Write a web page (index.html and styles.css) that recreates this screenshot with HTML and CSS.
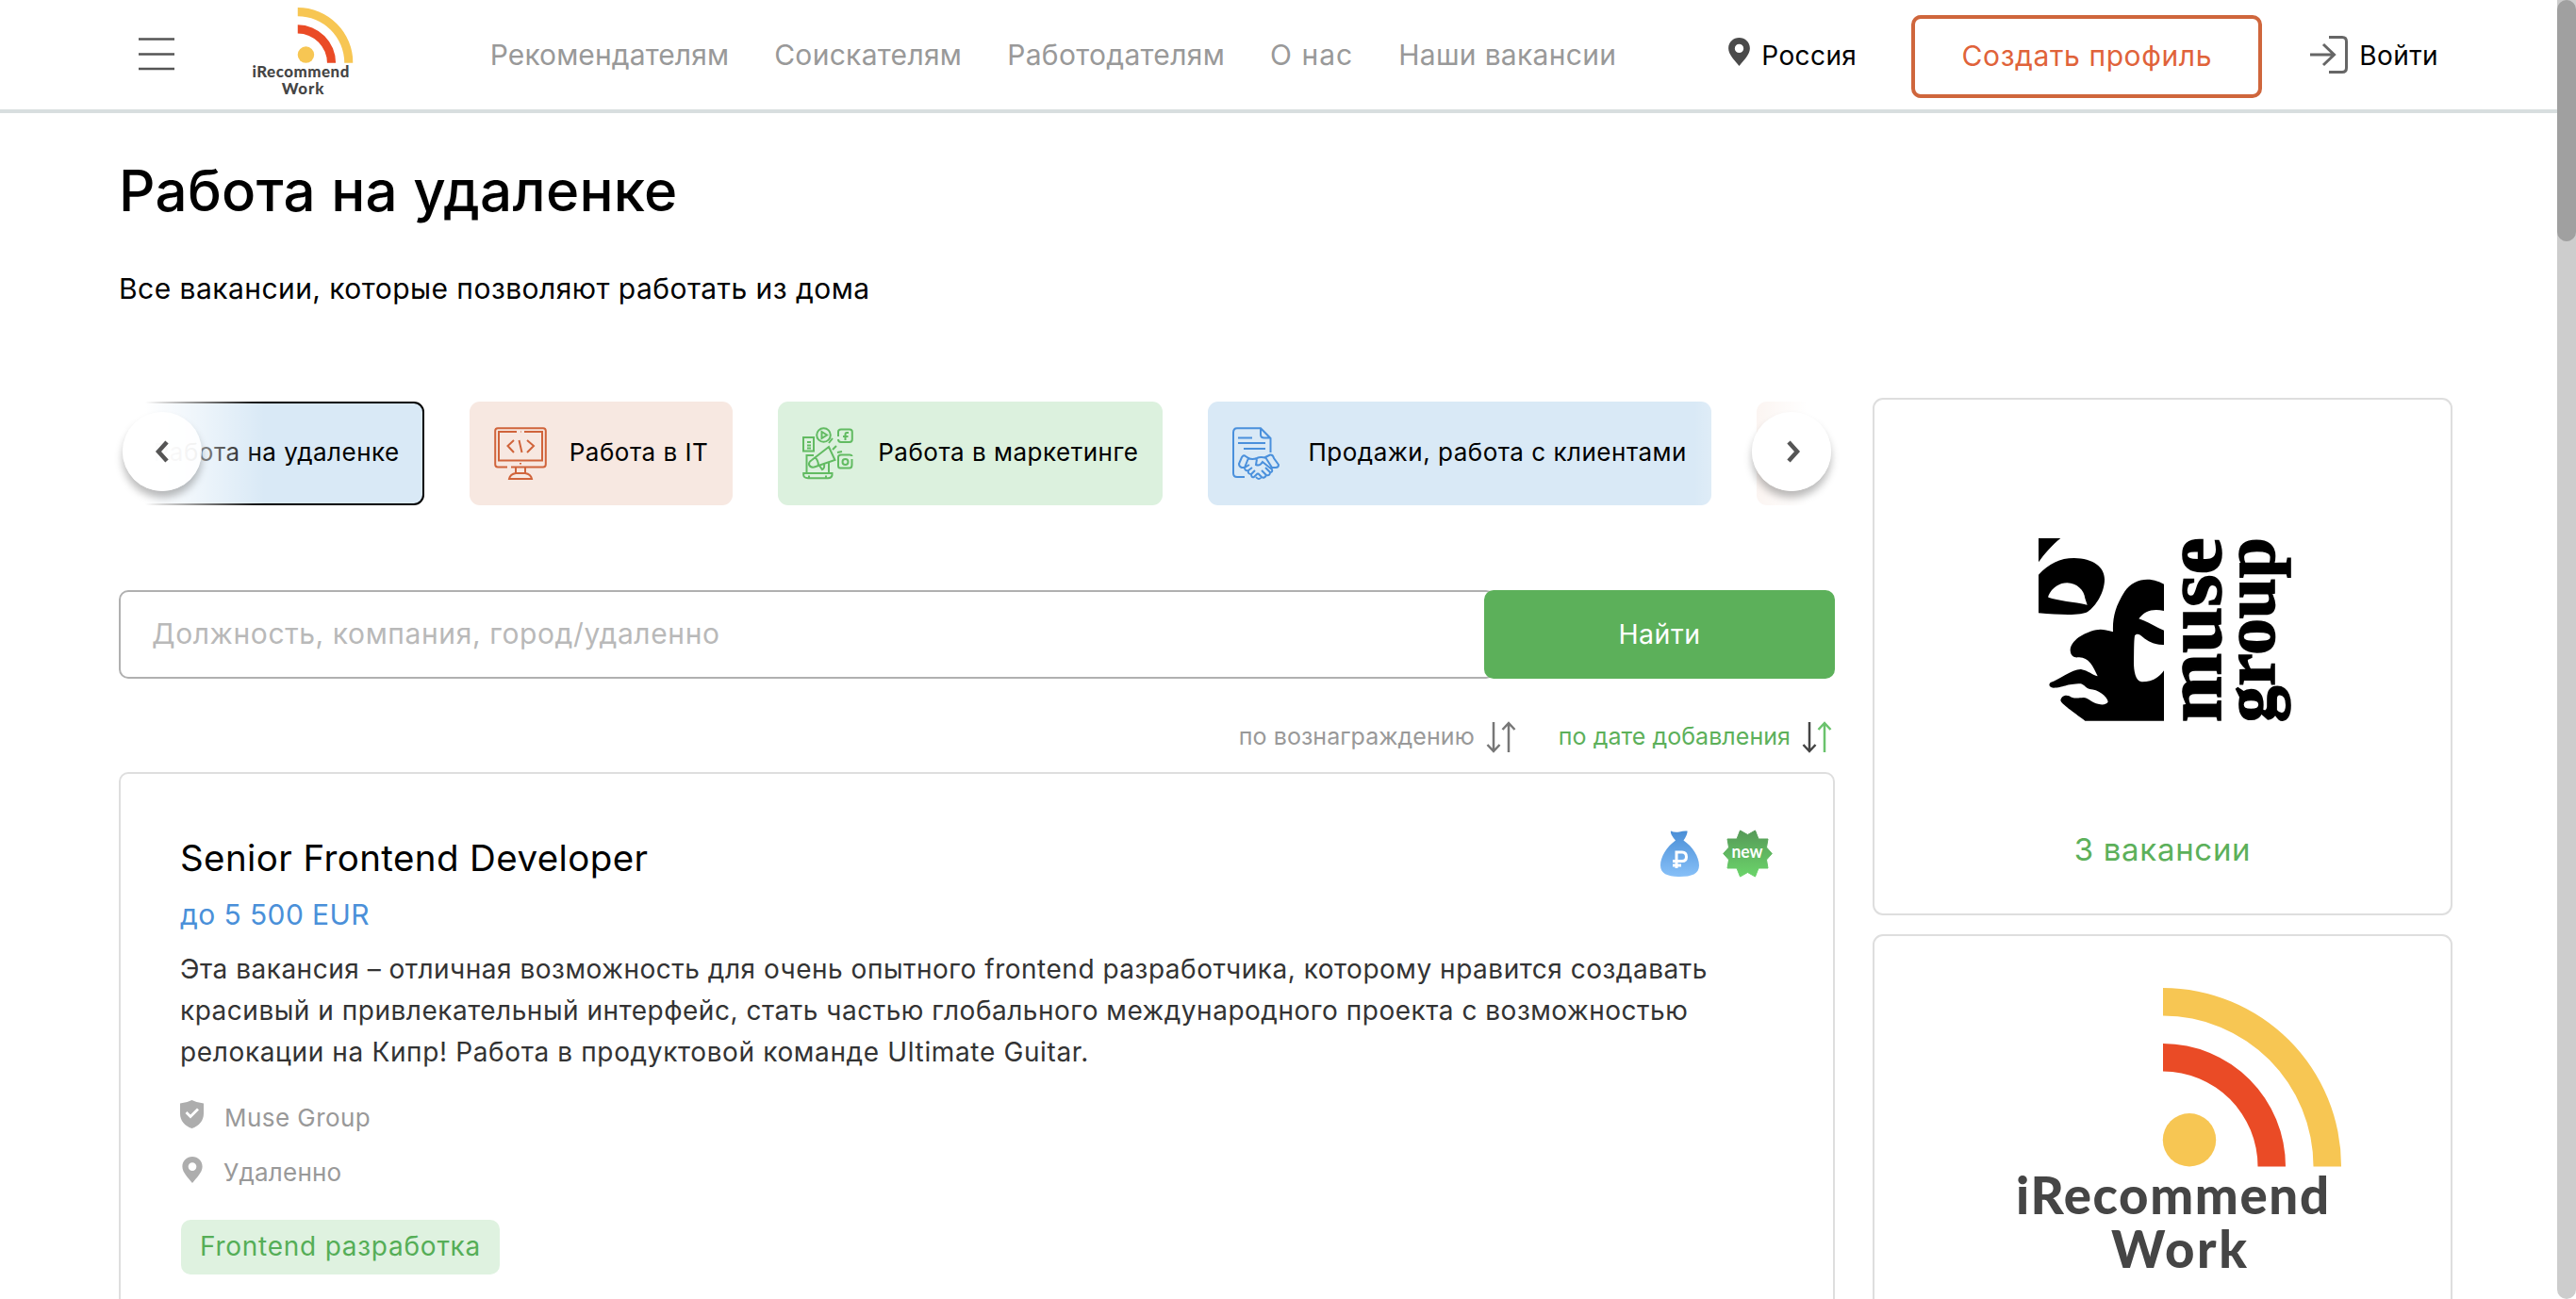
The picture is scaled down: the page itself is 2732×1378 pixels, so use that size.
FILE: index.html
```
<!DOCTYPE html>
<html lang="ru">
<head>
<meta charset="utf-8">
<title>Работа на удаленке</title>
<link rel="stylesheet" href="styles.css">
</head>
<body>
<svg class="defs" width="0" height="0" aria-hidden="true">
  <symbol id="logo" viewBox="0 0 344 306">
    <path fill="#f7c653" d="M154 0A189 189 0 0 1 343 189.500H313.500A159.500 160 0 0 0 154 29.500Z"/>
    <path fill="#ea4b26" d="M154 59A130 130.500 0 0 1 284 189.500H254.500A100.500 101 0 0 0 154 88.500Z"/>
    <circle cx="182" cy="161.300" r="28.200" fill="#f7c653"/>
    <g class="logo-text" fill="#454545">
      <text x="-2" y="240" textLength="332">iRecommend</text>
      <text x="99" y="297" textLength="144">Work</text>
    </g>
  </symbol>
  <symbol id="pin" viewBox="0 0 22 29">
    <path fill-rule="evenodd" d="M11 0C17 0 22 4.600 22 10.800C22 17.500 15.500 23 11 29C6.500 23 0 17.500 0 10.800C0 4.600 5 0 11 0ZM11 6.500A4.500 4.500 0 1 0 11 15.500A4.500 4.500 0 1 0 11 6.500Z"/>
  </symbol>
</svg>

<div class="page">
  <header class="header">
    <svg class="burger" viewBox="0 0 38 34"><path d="M0 1.500H38M0 17.500H38M0 33H38"/></svg>
    <svg class="logo"><use href="#logo"/></svg>
    <nav class="nav">
      <a>Рекомендателям</a><a>Соискателям</a><a>Работодателям</a><a>О нас</a><a>Наши вакансии</a>
    </nav>
    <div class="account">
      <svg class="header-pin"><use href="#pin"/></svg>
      <span class="region">Россия</span>
      <a class="create">Создать профиль</a>
      <svg class="login-icon" viewBox="0 0 40 40"><path d="M20 1.500H34Q38.500 1.500 38.500 6V34Q38.500 38.500 34 38.500H20M0 20H25M14 9L25.500 20L14 31"/></svg>
      <span class="login">Войти</span>
    </div>
  </header>

  <main class="main">
    <h1 class="title">Работа на удаленке</h1>
    <p class="subtitle">Все вакансии, которые позволяют работать из дома</p>

    <div class="columns">
      <section class="content">
        <div class="carousel">
          <div class="track">
            <div class="chip chip-blue chip-active"><span class="chip-icon"></span><span class="chip-name">Работа на удаленке</span></div>
            <div class="chip chip-red">
              <svg class="chip-icon" viewBox="0 0 56 56" stroke="#d0643b">
                <path d="M14 42.500H4Q1.200 42.500 1.200 39.500V4Q1.200 1.200 4 1.200H52Q54.800 1.200 54.800 4V39.500Q54.800 42.500 52 42.500H18M24 5H5V35.500H51V5H32M28 5h.5M28 38v1.500M23 43V49M33 43V49M23 49H33Q39 50 40 55H16Q17 50 23 49M21 14L14.500 20L21 27M35 14L42 20L35 27M26.500 14L29.500 27"/>
              </svg><span class="chip-name">Работа в IT</span></div>
            <div class="chip chip-green">
              <svg class="chip-icon" viewBox="0 0 56 56" stroke="#62bb62">
                <path d="M1 11H12V25.500H1ZM5 16H9M5 19.500H9M5 22.500H9M12 30H4.500V48.500M28 38V48.500M1.200 49H31.500V51Q31 54.200 27 54.200H6Q1.500 54 1.200 51ZM7 51.500V54M25 51.500V54M10 35L28 21L34.500 35L14 42Q9 44 7 40Q6.500 37 10 35M13 32Q17 35 17 41M18 41L21 45Q24 44 23 39M28 17L32 12M32 24L36 20M37 27L42 26M38 10V5Q38 2.500 41 2.500H50Q52.800 2.500 52.800 5V13Q52.800 16 50 16H41Q38 16 38 13M49 6H47Q45.500 6 45.500 8V14M43 10H48.500M52.500 34V40Q52.500 43.500 50 43.500H40Q38 43.500 38 41V32Q38 29.500 41 29.500H50Q52.500 29.500 52.500 31"/>
                <circle cx="22.500" cy="8.500" r="7.300"/><circle cx="45.500" cy="37" r="3"/><path d="M20.500 5V12L26 8.500Z"/>
              </svg><span class="chip-name">Работа в маркетинге</span></div>
            <div class="chip chip-blue">
              <svg class="chip-icon" viewBox="0 0 56 56" stroke="#4a90dc">
                <path d="M13 53H5Q1 53 1 49V6Q1 1.200 5 1.200H30L40.500 12V27M30 1.200V8Q30 11.500 34 11.500H40M6 11.500H21M6 17H35M12 23H35M14 31Q12 29 10 32L7 39Q7 42 10 43L13 43L17 33ZM35 32L40 29.500Q43 29 44 33L49 40Q49 43 46 43L42 43ZM17 33Q21 35 26 33Q30 31 36 33M26 34L25 40Q29 42 32 37L42 45Q43 48 40 48L35 43M40 48Q40 52 36 51L31 46M36 51Q34 55 31 53L27 49M31 53Q28 57 25 53M13 43Q13 47 17 46M13 43L18 40M17 46Q16 50 20 50M17 46L21 43M20 50Q20 54 23 53L27 49M20 50L24 46"/>
              </svg><span class="chip-name">Продажи, работа с клиентами</span></div>
            <div class="chip chip-red chip-next"></div>
          </div>
          <div class="fade fade-left"></div>
          <div class="fade fade-right"></div>
          <button class="arrow arrow-left"><svg viewBox="0 0 14 24"><path d="M12 2L3 12L12 22"/></svg></button>
          <button class="arrow arrow-right"><svg viewBox="0 0 14 24"><path d="M2 2L11 12L2 22"/></svg></button>
        </div>

        <div class="search">
          <div class="field">Должность, компания, город/удаленно</div>
          <button class="find">Найти</button>
        </div>

        <div class="sort">
          <span class="sort-item">по вознаграждению
            <svg viewBox="0 0 32 34"><path stroke="#777" d="M8 1V32M1.500 25L8 32L14.500 25M24 33V2M17.500 9L24 2L30.500 9"/></svg></span>
          <span class="sort-item sort-active">по дате добавления
            <svg viewBox="0 0 32 34"><path stroke="#444" d="M8 1V32M1.500 25L8 32L14.500 25"/><path stroke="#6ac26c" d="M24 33V2M17.500 9L24 2L30.500 9"/></svg></span>
        </div>

        <article class="job">
          <div class="job-head">
            <h2 class="job-title">Senior Frontend Developer</h2>
            <div class="badges">
              <svg class="bag" viewBox="0 0 41 49">
                <defs><linearGradient id="bagFill" x2="0" y2="1"><stop stop-color="#4a8ed6"/><stop offset="1" stop-color="#87c0f8"/></linearGradient></defs>
                <path fill="url(#bagFill)" d="M11 0.500Q15 2.500 20 1.500Q25 0 28.500 0.500Q29 4 24.500 10.500C34 17 41 28 41 37C41 46 33 49 20.500 49C8 49 0 46 0 37C0 28 7 17 16 10.500Q10 4 11 0.500Z"/>
                <path fill="none" stroke="#fff" stroke-width="3" d="M17 40V23H23Q27.500 23 27.500 28Q27.500 32.500 23 32.500H13M13 37H22"/>
              </svg>
              <svg class="new" viewBox="0 0 53 51">
                <defs><linearGradient id="newFill" x2="0" y2="1"><stop stop-color="#569a58"/><stop offset="1" stop-color="#6bd46a"/></linearGradient></defs>
                <path fill="url(#newFill)" stroke="url(#newFill)" stroke-linejoin="round" d="M18.500 1L26.500 5.500L34.500 1L38 10H48L46.500 19L52.300 25.500L46.500 32L48 41H38L34.500 50L26.500 45.500L18.500 50L15 41H5L6.500 32L.7 25.500L6.500 19L5 10H15Z"/>
                <text x="9.500" y="30" textLength="33" lengthAdjust="spacingAndGlyphs">new</text>
              </svg>
            </div>
          </div>
          <div class="salary">до 5 500 EUR</div>
          <p class="description">Эта вакансия – отличная возможность для очень опытного frontend разработчика, которому нравится создавать<br>красивый и привлекательный интерфейс, стать частью глобального международного проекта с возможностью<br><span class="last-line">релокации на Кипр! Работа в продуктовой команде Ultimate Guitar.</span></p>
          <div class="meta">
            <svg class="shield" viewBox="0 0 25 30"><path fill="#adadad" d="M12.500 0Q18 3 25 3.500V14C25 22 20 27.500 12.500 30C5 27.500 0 22 0 14V3.500Q7 3 12.500 0Z"/><path fill="none" stroke="#fff" stroke-width="2.800" d="M6.500 13L11 17.500L19 9.500"/></svg>
            <span>Muse Group</span>
          </div>
          <div class="meta">
            <svg class="place"><use href="#pin"/></svg>
            <span class="remote">Удаленно</span>
          </div>
          <span class="tag">Frontend разработка</span>
        </article>
      </section>

      <aside class="companies">
        <div class="company">
          <svg class="muse" viewBox="127 94 800 584">
            <path fill-rule="evenodd" d="M127 94H197C170 115 145 145 127 170ZM127 210C160 175 195 157 240 157C300 158 337 185 337 225C337 265 310 310 283 328C265 340 200 338 127 332ZM158 278C170 250 195 236 218 236C250 237 272 260 275 285L282 306C240 296 190 293 158 282Z"/>
            <path d="M526 240C480 215 430 222 400 265C372 310 362 345 364 392C340 385 325 382 310 386C270 395 228 420 228 452C230 470 240 474 252 473C285 470 300 500 315 533C300 530 285 515 262 511C235 510 190 545 165 553C158 560 160 568 175 570C205 570 215 557 262 557C275 562 278 572 290 574C315 575 345 595 348 614C345 625 325 625 310 620C290 612 285 602 270 601C255 602 245 604 232 600C220 590 200 592 197 610C200 622 240 648 275 675H526V515C510 540 480 552 455 551C435 548 430 515 430 490C431 450 430 425 433 404C437 397 445 398 452 403C475 425 500 434 526 433V387C500 377 475 360 446 350C465 325 490 317 526 325Z"/>
            <text transform="translate(707 680) rotate(-90)" font-size="254" textLength="588" lengthAdjust="spacingAndGlyphs">muse</text>
            <text transform="translate(877 680) rotate(-90)" font-size="234" textLength="588" lengthAdjust="spacingAndGlyphs">group</text>
          </svg>
          <a class="vacancies">3 вакансии</a>
        </div>
        <div class="company">
          <svg class="logo-large"><use href="#logo"/></svg>
        </div>
      </aside>
    </div>
  </main>
</div>
<div class="scrollbar"><div class="thumb"></div></div>
</body>
</html>
```
FILE: styles.css
```
* { box-sizing: border-box; }

body {
  margin: 0;
  display: flex;
  height: 1378px;
  overflow: hidden;
  background: #fff;
  color: #000;
  font-family: Inter, "Noto Sans", sans-serif;
}

h1, h2, p { margin: 0; font-weight: 400; }
button { border: 0; padding: 0; font-family: inherit; }
svg { display: block; flex: none; overflow: visible; }
.defs { width: 0; height: 0; }

.page { flex: 1; min-width: 0; height: 1378px; overflow: hidden; }

.scrollbar { flex: none; width: 20px; height: 1378px; background: #cdcdcd; border-radius: 0 0 10px 10px; }
.thumb { height: 256px; border-radius: 10px; background: #a0a0a0; }

/* Header */
.header {
  display: flex;
  align-items: center;
  height: 120px;
  padding: 0 126px 0 147px;
  border-bottom: 4px solid #d8dedf;
  white-space: nowrap;
}
.burger { width: 38px; height: 34px; margin-top: -2px; fill: none; stroke: #555; stroke-width: 2.4; }
.logo { width: 106.700px; height: 95px; margin-left: 83px; margin-top: -5px; }
.logo-text { font: 900 54.500px Lato, sans-serif; }
.nav { display: flex; gap: 48px; margin-left: 145px; padding-bottom: 1px; font-size: 30px; letter-spacing: .3px; color: #999; }
.nav a:nth-child(1) { letter-spacing: .1px; }
.nav a:nth-child(4) { letter-spacing: 1px; }
.nav a:nth-child(5) { letter-spacing: .3px; }
.account { display: flex; align-items: center; margin-left: auto; padding-top: 2px; font-size: 28px; letter-spacing: .4px; }
.header-pin { width: 23px; height: 30px; margin-top: -8px; fill: #4a4a4a; }
.region { margin-left: 12px; }
.create {
  width: 372px;
  height: 88px;
  margin: 2px 0 0 58px;
  border: 4px solid #cf663c;
  border-radius: 10px;
  color: #e0633a;
  font-size: 30px;
  letter-spacing: .6px;
  line-height: 79px;
  text-align: center;
}
.login-icon { width: 40px; height: 40px; margin-left: 51px; margin-top: -2px; fill: none; stroke: #666; stroke-width: 3; }
.login { margin-left: 12px; }

/* Page heading */
.main { padding-left: 126px; }
.title { margin-top: 46px; font-size: 60px; font-weight: 500; line-height: 72px; letter-spacing: .3px; }
.subtitle { margin-top: 48px; font-size: 30px; line-height: 40px; letter-spacing: .45px; }

.columns { display: grid; grid-template-columns: 1820px 615px; gap: 40px; margin-top: 96px; }
.content { padding-top: 4px; }

/* Category carousel */
.carousel { position: relative; height: 110px; }
.track { display: flex; justify-content: flex-end; gap: 48px; height: 110px; overflow: hidden; }
.chip {
  display: flex;
  flex: none;
  align-items: center;
  padding: 0 26px;
  border-radius: 11px;
  font-size: 26px;
  letter-spacing: .5px;
  white-space: nowrap;
}
.chip-name { margin-top: -3px; }
.chip-blue { background: #d9e9f6; }
.chip-red { background: #f7e8e1; }
.chip-green { background: #dcf1de; }
.chip-active { border: 2px solid #000; padding: 0 24px; }
.chip-next { width: 83px; padding: 0; border-radius: 11px 0 0 11px; }
.chip-icon { width: 56px; height: 56px; margin-right: 24px; fill: none; stroke-width: 2; }
.fade { position: absolute; top: 0; height: 110px; }
.fade-left { left: 0; width: 155px; background: linear-gradient(to right, #fff 18%, #fff0); }
.fade-right { right: 0; width: 150px; background: linear-gradient(to left, #fff 20%, #fff0); }
.arrow {
  position: absolute;
  top: 11px;
  display: grid;
  place-items: center;
  width: 84px;
  height: 84px;
  border-radius: 50%;
  background: #ffffffe0;
  box-shadow: 0 7px 8px #0004;
}
.arrow-left { left: 4px; }
.arrow-right { right: 4px; background: #fffffff5; }
.arrow svg { width: 14px; height: 24px; fill: none; stroke: #555; stroke-width: 4.500; }
.arrow-right svg { margin-left: 3px; }

/* Search */
.search { display: flex; height: 94px; margin-top: 90px; }
.field {
  flex: 1;
  margin-right: -12px;
  padding-left: 33px;
  border: 2px solid #b0b0b0;
  border-radius: 10px;
  color: #b9b9b9;
  font-size: 30px;
  letter-spacing: .6px;
  line-height: 88px;
}
.find { width: 372px; border-radius: 10px; background: #5cb05a; color: #fff; font-size: 28.500px; letter-spacing: .5px; line-height: 90px; }

/* Sorting */
.sort { display: flex; justify-content: flex-end; gap: 45px; height: 40px; margin-top: 41px; padding-right: 3px; color: #999; }
.sort-item { display: flex; align-items: center; gap: 12px; font-size: 25px; letter-spacing: .05px; line-height: 40px; }
.sort-active { color: #5cb05a; }
.sort svg { width: 32px; height: 34px; margin-top: 2px; fill: none; stroke-width: 2.500; }

/* Vacancy card */
.job { height: 700px; margin-top: 18px; padding: 65px 62px 0 63px; border: 2px solid #dedede; border-radius: 10px; }
.job-head { display: flex; justify-content: space-between; height: 48px; }
.job-title { font-size: 38.500px; line-height: 48px; letter-spacing: .4px; }
.badges { display: flex; gap: 25px; margin-top: -5px; padding-right: 2px; }
.bag { width: 41px; height: 49px; }
.new { width: 53px; height: 51px; margin-top: -1px; }
.new text { font: 700 18px Lato, sans-serif; fill: #fff; }
.salary { margin-top: 18px; color: #4a90d9; font-size: 30px; line-height: 36px; letter-spacing: .4px; }
.description { margin-top: 18px; color: #333; font-size: 28px; line-height: 44px; letter-spacing: .51px; white-space: nowrap; }
.last-line { letter-spacing: .64px; }
.meta { display: flex; height: 36px; margin-top: 29px; color: #999; font-size: 26px; line-height: 38px; letter-spacing: .45px; }
.meta + .meta { margin-top: 22px; }
.shield { width: 25px; height: 30px; margin: 0 22px 0 0; }
.place { width: 22px; height: 28px; margin: 2px 22px 0 2px; fill: #adadad; }
.remote { letter-spacing: .2px; }
.tag {
  display: inline-block;
  height: 58px;
  margin: 33px 0 0 1px;
  padding: 0 20px 0 20px;
  border-radius: 10px;
  background: #dff2e0;
  color: #55ae57;
  font-size: 28px;
  line-height: 57px;
  letter-spacing: .75px;
}

/* Companies */
.companies { display: flex; flex-direction: column; gap: 20px; }
.company { display: flex; flex-direction: column; align-items: center; height: 549px; border: 2px solid #dedede; border-radius: 11px; }
.muse { width: 266.700px; height: 194.700px; margin-top: 147px; margin-left: 3px; }
.muse text { font-family: "Liberation Serif", serif; font-weight: 700; stroke: #000; stroke-width: 5; }
.vacancies { margin-top: 115px; color: #5cb05a; font-size: 33px; line-height: 40px; letter-spacing: .7px; }
.logo-large { width: 344px; height: 306px; margin-top: 55px; margin-left: 36px; }
```
